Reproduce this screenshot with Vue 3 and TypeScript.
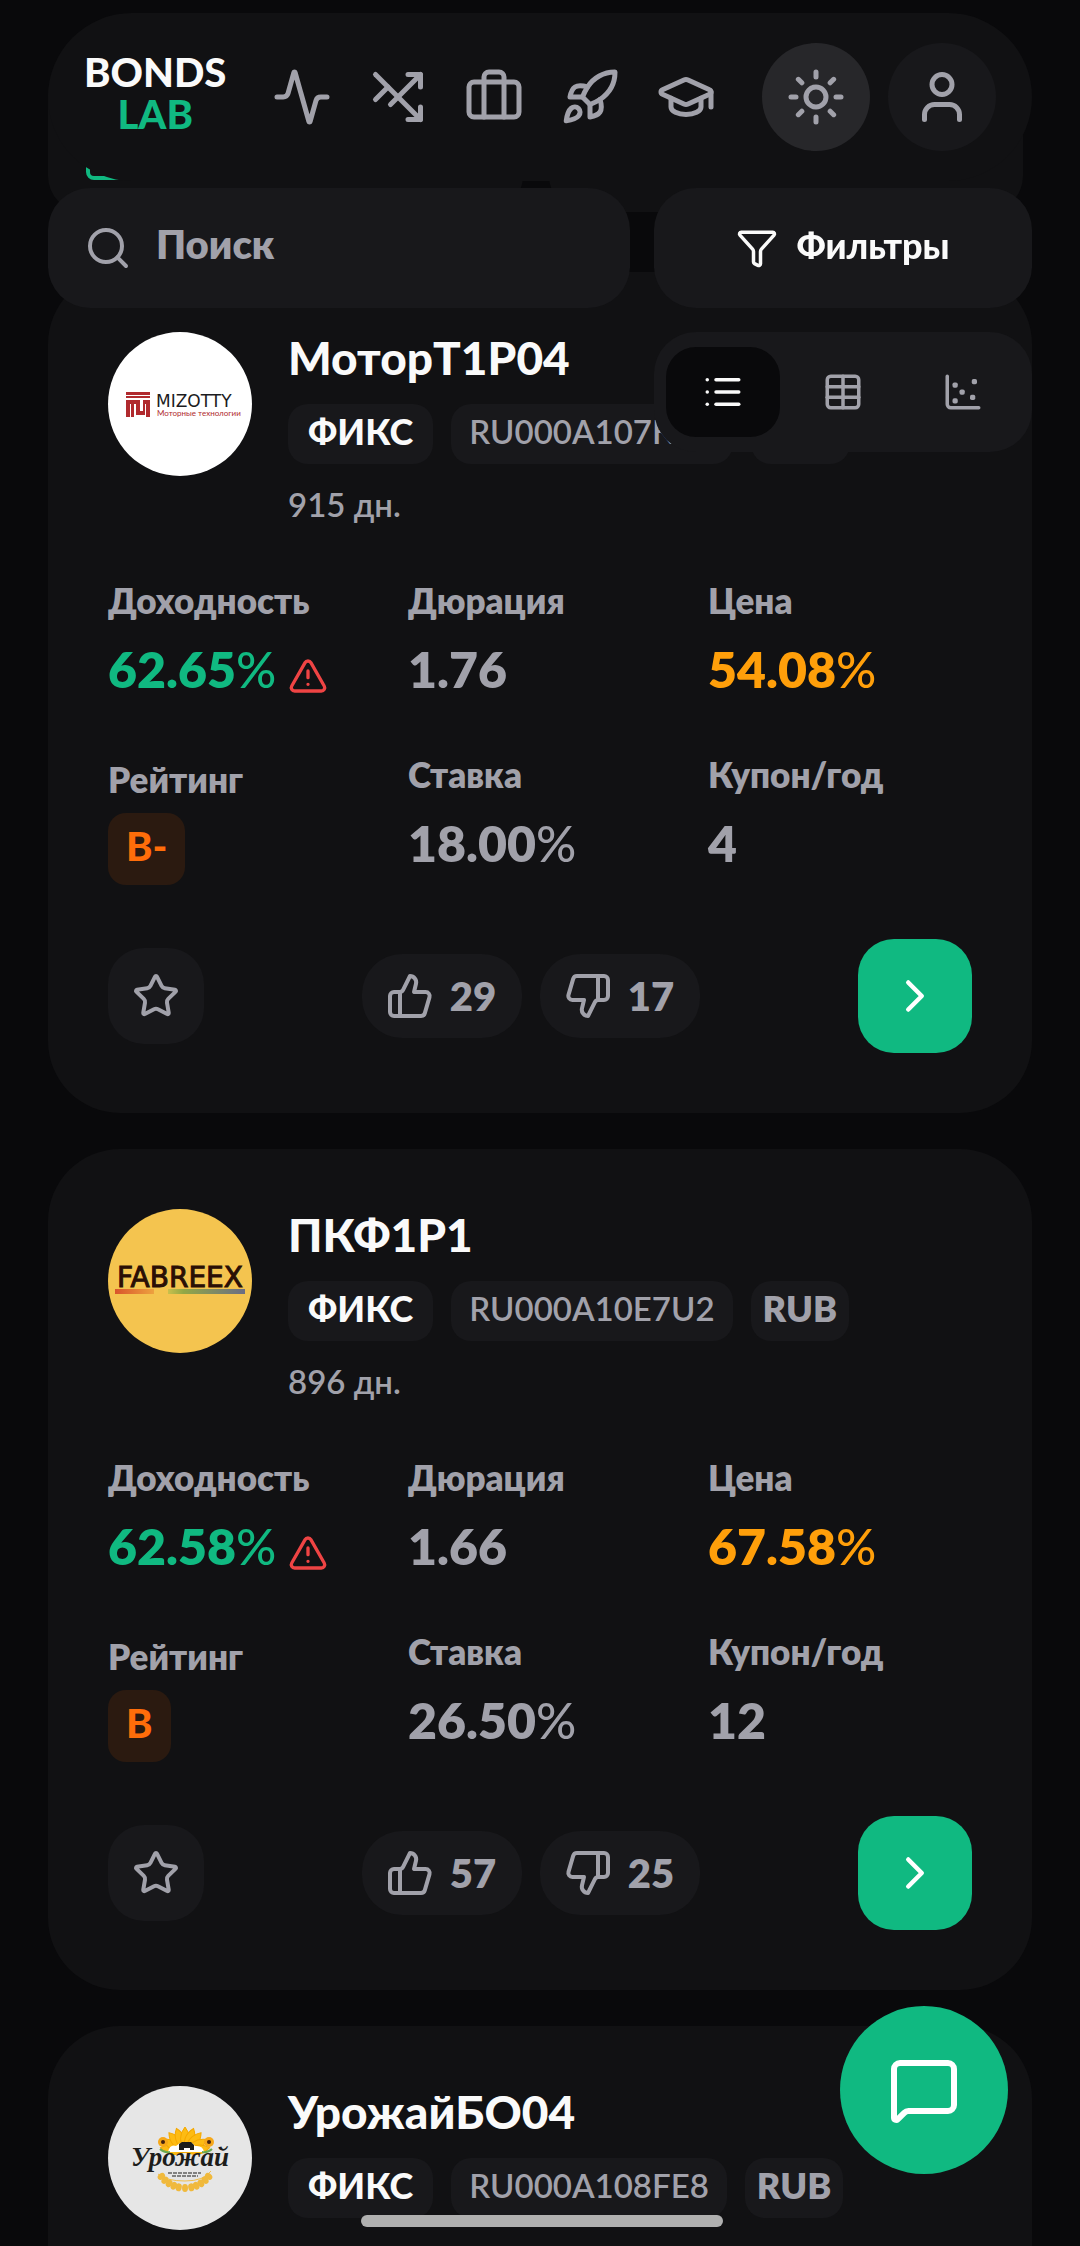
<script setup lang="ts">
import { ref } from 'vue'

interface Stats {
  yieldPct: string
  duration: string
  price: string
  rating: string
  rate: string
  coupons: number
  likes: number
  dislikes: number
}

interface Bond {
  id: string
  logo: 'mizotty' | 'fabreex' | 'urozhay'
  name: string
  isin: string
  days: number
  stats?: Stats
}

const query = ref('')
const view = ref('list')

const bonds: Bond[] = [
  { id: 'b1', logo: 'mizotty', name: 'МоторТ1Р04', isin: 'RU000A107KX0', days: 915, stats: { yieldPct: '62.65', duration: '1.76', price: '54.08', rating: 'B-', rate: '18.00', coupons: 4, likes: 29, dislikes: 17 } },
  { id: 'b2', logo: 'fabreex', name: 'ПКФ1Р1', isin: 'RU000A10E7U2', days: 896, stats: { yieldPct: '62.58', duration: '1.66', price: '67.58', rating: 'B', rate: '26.50', coupons: 12, likes: 57, dislikes: 25 } },
  { id: 'b3', logo: 'urozhay', name: 'УрожайБО04', isin: 'RU000A108FE8', days: 455 },
]

const navItems = [
  { label: 'Рынок', paths: ['M22 12h-2.48a2 2 0 0 0-1.93 1.46l-2.35 8.36a.25.25 0 0 1-.48 0L9.24 2.18a.25.25 0 0 0-.48 0l-2.35 8.36A2 2 0 0 1 4.49 12H2'] },
  { label: 'Сравнение', paths: ['M3 3l18 18', 'M16 3h5v5', 'M21 16v5h-5', 'M9 15 21 3', 'M3 13l5-5'] },
  { label: 'Портфель', paths: ['M16 20V4a2 2 0 0 0-2-2h-4a2 2 0 0 0-2 2v16', 'M4 6h16a2 2 0 0 1 2 2v10a2 2 0 0 1-2 2H4a2 2 0 0 1-2-2V8a2 2 0 0 1 2-2z'] },
  { label: 'Размещения', paths: ['M4.5 16.5c-1.5 1.26-2 5-2 5s3.74-.5 5-2c.71-.84.7-2.13-.09-2.91a2.18 2.18 0 0 0-2.91-.09z', 'm12 15-3-3a22 22 0 0 1 2-3.95A12.88 12.88 0 0 1 22 2c0 2.72-.78 7.5-6 11a22.35 22.35 0 0 1-4 2z', 'M9 12H4s.55-3.03 2-4c1.62-1.08 5 0 5 0', 'M12 15v5s3.03-.55 4-2c1.08-1.62 0-5 0-5'] },
  { label: 'Обучение', paths: ['M21.42 10.922a1 1 0 0 0-.019-1.838L12.83 5.18a2 2 0 0 0-1.66 0L2.6 9.08a1 1 0 0 0 0 1.832l8.57 3.908a2 2 0 0 0 1.66 0z', 'M22 10v6', 'M6 12.5V16a6 3 0 0 0 12 0v-3.5'] },
]

const views = [
  { id: 'list', label: 'Список', paths: ['M3 5h.01', 'M3 12h.01', 'M3 19h.01', 'M8 5h13', 'M8 12h13', 'M8 19h13'] },
  { id: 'table', label: 'Таблица', paths: ['M12 3v18', 'M3 9h18', 'M3 15h18', 'M5 3h14a2 2 0 0 1 2 2v14a2 2 0 0 1-2 2H5a2 2 0 0 1-2-2V5a2 2 0 0 1 2-2z'] },
  { id: 'map', label: 'Карта', paths: ['M3 3v16a2 2 0 0 0 2 2h16', 'M7 7.5h1v1h-1z', 'M18 5.5h1v1h-1z', 'M11 11.5h1v1h-1z', 'M7 16.5h1v1h-1z', 'M17 14.5h1v1h-1z'] },
]

const petals = [-80, -60, -40, -20, 0, 20, 40, 60, 80]
const grains = [-52, -42, -32, -22, -12, 0, 12, 22, 32, 42, 52]
</script>

<template>
  <div class="page">
    <header class="topbar">
      <a class="brand" href="#"><span>BONDS</span><span class="brand-lab">LAB</span></a>
      <nav class="nav" aria-label="Разделы">
        <a v-for="item in navItems" :key="item.label" href="#" :aria-label="item.label">
          <svg class="icon i60" viewBox="0 0 24 24"><path v-for="d in item.paths" :key="d" :d="d" /></svg>
        </a>
      </nav>
      <div class="top-actions">
        <button class="round lit" type="button" aria-label="Тема">
          <svg class="icon i60" viewBox="0 0 24 24">
            <circle cx="12" cy="12" r="4" />
            <path d="M12 2v2M12 20v2M4.93 4.93l1.41 1.41M17.66 17.66l1.41 1.41M2 12h2M20 12h2M6.34 17.66l-1.41 1.41M19.07 4.93l-1.41 1.41" />
          </svg>
        </button>
        <button class="round" type="button" aria-label="Профиль">
          <svg class="icon i60" viewBox="0 0 24 24">
            <circle cx="12" cy="7" r="4" />
            <path d="M19 21v-2a4 4 0 0 0-4-4H9a4 4 0 0 0-4 4v2" />
          </svg>
        </button>
      </div>
    </header>

    <div class="toolbar">
      <label class="search">
        <svg class="icon i48" viewBox="0 0 24 24" aria-hidden="true"><circle cx="11" cy="11" r="8" /><path d="m21 21-4.3-4.3" /></svg>
        <input v-model="query" type="text" placeholder="Поиск" aria-label="Поиск" />
      </label>
      <button class="filters" type="button">
        <svg class="icon i42" viewBox="0 0 24 24" aria-hidden="true">
          <path d="M10 20a1 1 0 0 0 .553.895l2 1A1 1 0 0 0 14 21v-7a2 2 0 0 1 .517-1.341L21.74 4.67A1 1 0 0 0 21 3H3a1 1 0 0 0-.742 1.67l7.225 7.989A2 2 0 0 1 10 14z" />
        </svg>
        <span>Фильтры</span>
      </button>
      <div class="views">
        <button v-for="v in views" :key="v.id" type="button" :class="{ active: view === v.id }" :aria-label="v.label" @click="view = v.id">
          <svg class="icon i42" viewBox="0 0 24 24"><path v-for="d in v.paths" :key="d" :d="d" /></svg>
        </button>
      </div>
    </div>

    <main>
      <div class="summary">
        <div class="summary-card">
          <svg class="axis" viewBox="0 0 48 48" aria-hidden="true"><path d="M2 6v34a6 6 0 0 0 6 6h38" /></svg>
        </div>
        <div class="summary-card"></div>
      </div>

      <article v-for="b in bonds" :key="b.id" class="card">
        <div class="head">
          <svg v-if="b.logo === 'mizotty'" class="logo" viewBox="0 0 144 144" aria-hidden="true">
            <circle cx="72" cy="72" r="72" fill="#fff" />
            <g fill="#b02a2e">
              <path d="M18 60h24v3H18zM18 64h24v2H18z" />
              <path d="M18 68h14v11h3V68h7v17h-4V72h-1v11H28V72h-2v13h-3V72h-1v13h-4z" />
            </g>
            <text x="48" y="75" font-size="17" fill="#1c1c1e" font-family="DejaVu Sans, sans-serif">MIZOTTY</text>
            <text x="49" y="84" font-size="8" fill="#b02a2e" font-family="Lato, sans-serif">Моторные технологии</text>
          </svg>
          <svg v-else-if="b.logo === 'fabreex'" class="logo" viewBox="0 0 144 144" aria-hidden="true">
            <defs>
              <linearGradient id="warm"><stop offset="0" stop-color="#d9542b" /><stop offset="1" stop-color="#eda23f" /></linearGradient>
              <linearGradient id="cool"><stop offset="0" stop-color="#c9c04c" /><stop offset=".2" stop-color="#93a845" /><stop offset="1" stop-color="#6b6d84" /></linearGradient>
            </defs>
            <circle cx="72" cy="72" r="72" fill="#f4c44f" />
            <text x="72" y="78" font-size="28" fill="#2a0f05" stroke="#2a0f05" stroke-width="1" text-anchor="middle" font-family="DejaVu Sans, sans-serif">FABREEX</text>
            <rect x="7" y="80" width="39" height="5" fill="url(#warm)" />
            <rect x="60" y="80" width="77" height="5" fill="url(#cool)" />
          </svg>
          <svg v-else class="logo" viewBox="0 0 144 144" aria-hidden="true">
            <circle cx="72" cy="72" r="72" fill="#e6e6e6" />
            <path v-for="a in petals" :key="a" d="M77 66q-9-14 0-25q9 11 0 25" fill="#fdbb13" stroke="#f5a800" stroke-width="1" :transform="`rotate(${a} 77 66)`" />
            <path d="M60 66q2-8 8-6l4-3h12l3 3q8-1 9 6z" fill="#fff" />
            <path d="M71 64v-6l3-2h9l3 3v5h-4v-2h-6v2z" fill="#1d1d1b" />
            <g fill="#f6a81a"><circle cx="55" cy="56" r="5" /><circle cx="101" cy="56" r="5" /></g>
            <g fill="#43210f"><circle cx="55" cy="56" r="2" /><circle cx="101" cy="56" r="2" /></g>
            <path d="M52 63q4 4 10 3M104 63q-4 4-10 3" fill="none" stroke="#6aa84f" stroke-width="2" />
            <path d="M50 88q8 7 27 7t26-10" fill="none" stroke="#f0bf4c" stroke-width="1" />
            <g fill="#f0b93c">
              <ellipse v-for="g in grains" :key="g" cx="77" cy="102" rx="3" ry="4" :transform="`rotate(${g} 77 72)`" />
            </g>
            <text x="72" y="80" font-size="27" font-weight="700" font-style="italic" fill="#1d1d1b" text-anchor="middle" font-family="Liberation Serif, serif">Урожай</text>
            <path d="M60 87h33M64 90h26" stroke="#1d1d1b" stroke-width="1" stroke-dasharray="4 1" />
          </svg>
          <div class="title">
            <h2>{{ b.name }}</h2>
            <div class="chips">
              <span class="chip kind">ФИКС</span>
              <span class="chip isin">{{ b.isin }}</span>
              <span class="chip currency">RUB</span>
            </div>
            <p>{{ b.days }} дн.</p>
          </div>
        </div>

        <template v-if="b.stats">
          <dl class="stats">
            <div>
              <dt>Доходность</dt>
              <dd class="green">{{ b.stats.yieldPct }}<span class="pct">%</span>
                <svg class="icon warn" viewBox="0 0 24 24" aria-hidden="true">
                  <path d="m21.73 18-8-14a2 2 0 0 0-3.48 0l-8 14A2 2 0 0 0 4 21h16a2 2 0 0 0 1.73-3M12 9v4M12 17h.01" />
                </svg>
              </dd>
            </div>
            <div><dt>Дюрация</dt><dd>{{ b.stats.duration }}</dd></div>
            <div><dt>Цена</dt><dd class="amber">{{ b.stats.price }}<span class="pct">%</span></dd></div>
            <div class="rating"><dt>Рейтинг</dt><dd><span class="badge">{{ b.stats.rating }}</span></dd></div>
            <div><dt>Ставка</dt><dd>{{ b.stats.rate }}<span class="pct">%</span></dd></div>
            <div><dt>Купон/год</dt><dd>{{ b.stats.coupons }}</dd></div>
          </dl>

          <div class="actions">
            <button class="star" type="button" aria-label="В избранное">
              <svg class="icon i48" viewBox="0 0 24 24">
                <path d="M11.525 2.295a.53.53 0 0 1 .95 0l2.31 4.679a2.123 2.123 0 0 0 1.595 1.16l5.166.756a.53.53 0 0 1 .294.904l-3.736 3.638a2.123 2.123 0 0 0-.611 1.878l.882 5.14a.53.53 0 0 1-.771.56l-4.618-2.428a2.122 2.122 0 0 0-1.973 0L6.396 21.01a.53.53 0 0 1-.77-.56l.881-5.139a2.122 2.122 0 0 0-.611-1.879L2.16 9.795a.53.53 0 0 1 .294-.906l5.165-.755a2.122 2.122 0 0 0 1.597-1.16z" />
              </svg>
            </button>
            <div class="votes">
              <button type="button" aria-label="Нравится">
                <svg class="icon i48" viewBox="0 0 24 24">
                  <path d="M7 10v12M15 5.88 14 10h5.83a2 2 0 0 1 1.92 2.56l-2.33 8A2 2 0 0 1 17.5 22H4a2 2 0 0 1-2-2v-8a2 2 0 0 1 2-2h2.76a2 2 0 0 0 1.79-1.11L12 2a3.13 3.13 0 0 1 3 3.88Z" />
                </svg>
                <span>{{ b.stats.likes }}</span>
              </button>
              <button type="button" aria-label="Не нравится">
                <svg class="icon i48" viewBox="0 0 24 24">
                  <path d="M17 14V2M9 18.12 10 14H4.17a2 2 0 0 1-1.92-2.56l2.33-8A2 2 0 0 1 6.5 2H20a2 2 0 0 1 2 2v8a2 2 0 0 1-2 2h-2.76a2 2 0 0 0-1.79 1.11L12 22a3.13 3.13 0 0 1-3-3.88Z" />
                </svg>
                <span>{{ b.stats.dislikes }}</span>
              </button>
            </div>
            <button class="go" type="button" aria-label="Открыть">
              <svg class="icon i54" viewBox="0 0 24 24"><path d="m9 18 6-6-6-6" /></svg>
            </button>
          </div>
        </template>
      </article>
    </main>

    <button class="fab" type="button" aria-label="Чат">
      <svg class="icon i72" viewBox="0 0 24 24">
        <path d="M22 17a2 2 0 0 1-2 2H6.828a2 2 0 0 0-1.414.586l-2.202 2.202A.71.71 0 0 1 2 21.286V5a2 2 0 0 1 2-2h16a2 2 0 0 1 2 2z" />
      </svg>
    </button>
    <div class="home-bar"></div>
  </div>
</template>

<style>
body {
  background: #09090b;
}
</style>

<style scoped>
* {
  box-sizing: border-box;
}
.page {
  height: 100vh;
  overflow: hidden;
  background: #09090b;
  color: #a1a1aa;
  font-family: Lato, "Liberation Sans", sans-serif;
  font-size: 36px;
  font-weight: 800;
}
button {
  border: 0;
  padding: 0;
  background: #18181b;
  color: inherit;
  font: inherit;
  display: flex;
  align-items: center;
  justify-content: center;
}
.icon {
  display: block;
  flex: none;
  fill: none;
  stroke: currentColor;
  stroke-width: 2;
  stroke-linecap: round;
  stroke-linejoin: round;
}
.i42 { width: 42px; height: 42px; }
.i48 { width: 48px; height: 48px; }
.i54 { width: 54px; height: 54px; }
.i60 { width: 60px; height: 60px; }
.i72 { width: 72px; height: 72px; }

.topbar {
  position: fixed;
  z-index: 3;
  top: 13px;
  left: 48px;
  right: 48px;
  height: 168px;
  padding: 0 36px;
  border-radius: 84px;
  background: #111113;
  display: flex;
  align-items: center;
  justify-content: space-between;
}
.brand {
  display: flex;
  flex-direction: column;
  align-items: center;
  padding-bottom: 8px;
  color: #fafafa;
  text-decoration: none;
  font-size: 40px;
  font-weight: 900;
  line-height: 42px;
}
.brand-lab { color: #10b981; }
.nav {
  display: flex;
  gap: 36px;
}
.nav a { color: #a1a1aa; }
.top-actions {
  display: flex;
  gap: 18px;
}
.round {
  width: 108px;
  height: 108px;
  border-radius: 50%;
}
.lit { background: #27272a; }

.toolbar {
  position: fixed;
  z-index: 2;
  top: 188px;
  left: 48px;
  right: 48px;
  display: grid;
  grid-template-columns: minmax(0, 1fr) 378px;
  gap: 24px;
  pointer-events: none;
}
.toolbar > * {
  height: 120px;
  border-radius: 42px;
  background: #18181b;
  pointer-events: auto;
}
.search {
  display: flex;
  align-items: center;
  gap: 24px;
  padding: 0 36px;
}
.search input {
  flex: 1;
  min-width: 0;
  padding: 0 0 8px;
  border: 0;
  outline: 0;
  background: transparent;
  color: #fafafa;
  font: inherit;
  font-size: 40px;
}
.search input::placeholder {
  color: #a1a1aa;
  opacity: 1;
}
.filters {
  gap: 18px;
  color: #fafafa;
  font-weight: 900;
}
.filters span { padding-bottom: 6px; }
.views {
  grid-column: 2;
  display: flex;
  align-items: center;
  gap: 6px;
  padding: 0 12px;
}
.views button {
  flex: 1;
  height: 90px;
  border-radius: 30px;
  background: transparent;
}
.views .active {
  background: #09090b;
  color: #fafafa;
}

main {
  padding: 60px 48px 0;
}
.summary {
  display: flex;
  gap: 26px;
  height: 152px;
  padding-right: 9px;
  margin-bottom: 60px;
}
.summary-card {
  flex: 1;
  display: flex;
  align-items: flex-end;
  padding: 0 38px 32px;
  border-radius: 36px;
  background: #111113;
}
.axis {
  width: 48px;
  height: 48px;
  fill: none;
  stroke: #10b981;
  stroke-width: 4;
}

.card {
  margin-bottom: 36px;
  padding: 60px;
  border-radius: 72px;
  background: #111113;
}
.head {
  display: flex;
  align-items: flex-start;
  gap: 36px;
}
.logo {
  flex: none;
  width: 144px;
  height: 144px;
  font-weight: 400;
}
h2 {
  margin: 0 0 20px;
  color: #fafafa;
  font-size: 46px;
  font-weight: 900;
  line-height: 52px;
}
.chips {
  display: flex;
  gap: 18px;
}
.chip {
  padding: 0 18px 6px;
  border-radius: 20px;
  background: #18181b;
  line-height: 54px;
}
.kind {
  padding: 0 20px 6px;
  color: #fafafa;
  font-weight: 900;
}
.isin {
  font-size: 33px;
  font-weight: 600;
}
.currency { padding: 0 12px 6px; }
.title p {
  margin: 16px 0 0;
  font-size: 33px;
  font-weight: 600;
  line-height: 48px;
}

.stats {
  display: grid;
  grid-template-columns: repeat(3, 1fr);
  gap: 48px 36px;
  margin: 48px 0 54px;
}
dt {
  margin-bottom: 12px;
  font-size: 35px;
  line-height: 48px;
}
dd {
  margin: 0;
  font-size: 50px;
  line-height: 66px;
  white-space: nowrap;
}
.pct { font-weight: 500; }
.green { color: #10b981; }
.amber { color: #ff9f0a; }
.warn {
  display: inline-block;
  width: 40px;
  height: 40px;
  margin-left: 12px;
  vertical-align: -8px;
  color: #ef4444;
}
.rating { padding-top: 5px; }
.rating dt { margin-bottom: 10px; }
.rating dd {
  display: flex;
  line-height: 72px;
}
.badge {
  padding: 0 18px 6px;
  border-radius: 18px;
  background: #2b1a10;
  color: #ff6d0a;
  font-size: 40px;
  font-weight: 900;
  line-height: 66px;
}

.actions {
  display: flex;
  align-items: center;
  justify-content: space-between;
}
.star {
  width: 96px;
  height: 96px;
  border-radius: 36px;
}
.votes {
  display: flex;
  gap: 18px;
}
.votes button {
  width: 160px;
  height: 84px;
  padding: 0 24px;
  gap: 14px;
  border-radius: 40px;
  font-size: 40px;
}
.votes span {
  flex: 1;
  text-align: center;
}
.go {
  width: 114px;
  height: 114px;
  border-radius: 36px;
  background: #10b981;
  color: #fff;
}
.fab {
  position: fixed;
  z-index: 4;
  right: 72px;
  bottom: 72px;
  width: 168px;
  height: 168px;
  border-radius: 50%;
  background: #10b981;
  color: #fff;
}
.home-bar {
  position: fixed;
  z-index: 5;
  bottom: 19px;
  left: 50%;
  width: 362px;
  height: 12px;
  margin-left: -179px;
  border-radius: 6px;
  background: #b0b0b0;
}
</style>
